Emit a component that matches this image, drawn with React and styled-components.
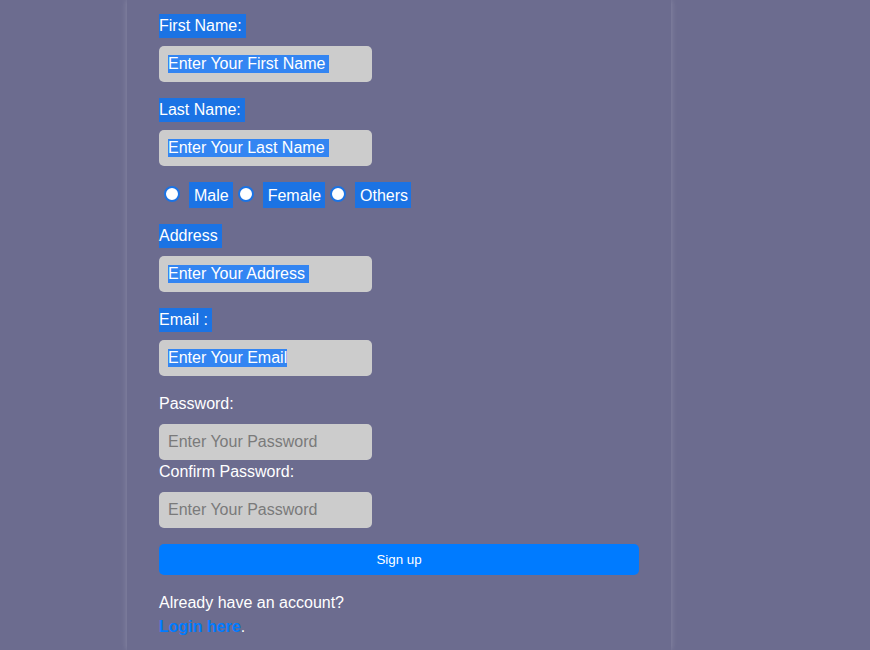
import React from 'react'
import styled, { createGlobalStyle } from 'styled-components'

let GlobalStyle = createGlobalStyle`
  html, body {
    margin: 0;
    padding: 0;
    background: #6c6c8f;
    font-family: "Liberation Sans", Arial, sans-serif;
    overflow: hidden;
  }
`

let Page = styled.div`
  padding-left: 127px;
  height: 650px;
`

let Card = styled.div`
  width: 544px;
  height: 650px;
  box-sizing: border-box;
  padding: 14px 32px 0 32px;
  background: #6c6c8f;
  box-shadow: 0 0 6px rgba(255, 255, 255, 0.22);
`

let Form = styled.form`
  display: flex;
  flex-direction: column;
  align-items: flex-start;
  width: 480px;
`

let Label = styled.label`
  display: block;
  height: 24px;
  line-height: 24px;
  font-size: 16px;
  color: #fff;
  margin-bottom: 8px;
`

let Selected = styled.span`
  display: inline-block;
  background: ${props => props.onGrey ? "#3385f2" : "#1b73e4"};
  color: #fff;
  padding-right: ${props => props.trail ? "4px" : "0"};
  line-height: ${props => props.tall || "24px"};
`

let Field = styled.div`
  width: 213px;
  height: 36px;
  box-sizing: border-box;
  padding: 0 9px;
  display: flex;
  align-items: center;
  background: #cccccc;
  border-radius: 5px;
  font-size: 16px;
  line-height: 18px;
  margin-bottom: ${props => props.tight ? "0" : "16px"};
`

let Input = styled.input`
  width: 213px;
  height: 36px;
  box-sizing: border-box;
  padding: 0 9px;
  border: none;
  outline: none;
  background: #cccccc;
  border-radius: 5px;
  font-family: "Liberation Sans", Arial, sans-serif;
  font-size: 16px;
  color: #333;
  margin-bottom: ${props => props.tight ? "0" : "16px"};

  &::placeholder {
    color: #7a7a7a;
  }
`

let RadioRow = styled.div`
  display: flex;
  align-items: center;
  height: 26px;
  margin-bottom: 16px;
  font-size: 16px;
`

let Radio = styled.input`
  appearance: none;
  width: 16px;
  height: 16px;
  box-sizing: border-box;
  margin: 0 9px 2px 5px;
  border: 2px solid #1b73e4;
  border-radius: 50%;
  background: #fff;
`

let RadioLabel = styled.span`
  display: inline-block;
  height: 26px;
  line-height: 28px;
  padding: 0 ${props => props.right || "4px"} 0 5px;
  background: #1b73e4;
  color: #fff;
`

let PlainLabel = styled.label`
  display: block;
  height: 24px;
  line-height: 24px;
  font-size: 16px;
  color: #fff;
  margin-bottom: 8px;
`

let SubmitButton = styled.button`
  width: 480px;
  height: 31px;
  margin-top: 16px;
  border: none;
  border-radius: 5px;
  background: #007bff;
  color: #fff;
  font-family: "Liberation Sans", Arial, sans-serif;
  font-size: 13.33px;
`

let Footer = styled.p`
  margin: 16px 0 0 0;
  font-size: 16px;
  line-height: 24px;
  color: #fff;
`

let LoginLink = styled.a`
  color: #007bff;
  font-weight: bold;
  text-decoration: none;
`

export default function App() {
  return <>
    <GlobalStyle />
    <Page>
      <Card>
        <Form onSubmit={e => e.preventDefault()}>
          <Label><Selected trail>First Name:</Selected></Label>
          <Field><Selected onGrey trail tall="18px">Enter Your First Name</Selected></Field>

          <Label><Selected trail>Last Name:</Selected></Label>
          <Field><Selected onGrey trail tall="18px">Enter Your Last Name</Selected></Field>

          <RadioRow>
            <Radio type="radio" name="gender" />
            <RadioLabel>Male</RadioLabel>
            <Radio type="radio" name="gender" />
            <RadioLabel>Female</RadioLabel>
            <Radio type="radio" name="gender" />
            <RadioLabel right="3px">Others</RadioLabel>
          </RadioRow>

          <Label><Selected trail>Address</Selected></Label>
          <Field><Selected onGrey trail tall="18px">Enter Your Address</Selected></Field>

          <Label><Selected trail>Email :</Selected></Label>
          <Field><Selected onGrey tall="18px">Enter Your Email</Selected></Field>

          <PlainLabel>Password:</PlainLabel>
          <Input type="password" placeholder="Enter Your Password" tight />
          <PlainLabel>Confirm Password:</PlainLabel>
          <Input type="password" placeholder="Enter Your Password" tight />

          <SubmitButton type="submit">Sign up</SubmitButton>

          <Footer>
            Already have an account?<br />
            <LoginLink href="#">Login here</LoginLink>.
          </Footer>
        </Form>
      </Card>
    </Page>
  </>
}
